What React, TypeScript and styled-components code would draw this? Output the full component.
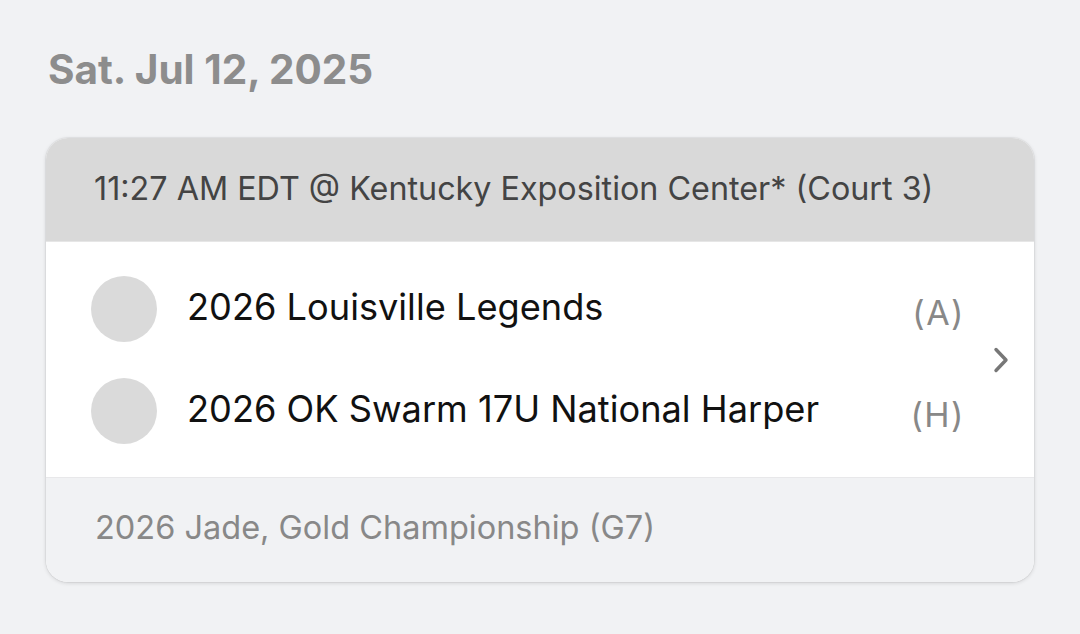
import React from "react";
import styled, { createGlobalStyle } from "styled-components";

const Global = createGlobalStyle`
  html, body { margin: 0; padding: 0; background: #f1f2f4; }
  body { font-family: "Inter", "Noto Sans", sans-serif; -webkit-font-smoothing: antialiased; }
`;

const Page = styled.div`
  width: 1080px;
  height: 634px;
  box-sizing: border-box;
  padding: 46px 46px 0 46px;
  background: #f1f2f4;
  display: flex;
  flex-direction: column;
`;

const DateTitle = styled.h1`
  margin: 0 0 0 2px;
  font-size: 40.5px;
  line-height: 48px;
  font-weight: 700;
  color: #8d8d8d;
  letter-spacing: 0;
`;

const Card = styled.div`
  margin-top: 44px;
  width: 988px;
  border-radius: 22px;
  overflow: hidden;
  background: #fff;
  box-shadow: 0 1px 4px rgba(0, 0, 0, 0.14), 0 0 0 1px rgba(0, 0, 0, 0.04);
  display: flex;
  flex-direction: column;
`;

const Header = styled.div`
  height: 104px;
  box-sizing: border-box;
  background: #d9d9d9;
  display: flex;
  align-items: center;
  padding: 0 0 3px 48px;
  font-size: 32.3px;
  color: #444;
  border-bottom: 1px solid #e6e6e6;
`;

const Body = styled.div`
  height: 235px;
  display: flex;
  align-items: center;
`;

const Rows = styled.div`
  flex: 1;
  display: flex;
  flex-direction: column;
  gap: 36px;
  padding-left: 45px;
`;

const TeamRow = styled.div`
  display: flex;
  align-items: center;
  height: 66px;
`;

const Avatar = styled.div`
  width: 66px;
  height: 66px;
  border-radius: 50%;
  background: #dadada;
  flex-shrink: 0;
`;

const TeamName = styled.div`
  margin-left: 30px;
  flex: 1;
  font-size: 36.2px;
  color: #111;
  margin-top: -3px;
`;

const Side = styled.div`
  font-size: 34px;
  color: #888;
  margin-top: 7px;
  letter-spacing: 1.5px;
`;

const ChevronBox = styled.div`
  width: 69px;
  padding-left: 3px;
  box-sizing: border-box;
  display: flex;
  justify-content: center;
  align-items: center;
`;

const Footer = styled.div`
  height: 105px;
  box-sizing: border-box;
  background: #f1f2f4;
  border-top: 1px solid #e8e8ea;
  display: flex;
  align-items: center;
  padding: 0 0 6px 49px;
  font-size: 32.5px;
  color: #888;
`;

export default function App() {
  return (
    <>
      <Global />
      <Page>
        <DateTitle>Sat. Jul 12, 2025</DateTitle>
        <Card>
          <Header>11:27 AM EDT @ Kentucky Exposition Center* (Court 3)</Header>
          <Body>
            <Rows>
              <TeamRow>
                <Avatar />
                <TeamName>2026 Louisville Legends</TeamName>
                <Side>(A)</Side>
              </TeamRow>
              <TeamRow>
                <Avatar />
                <TeamName>2026 OK Swarm 17U National Harper</TeamName>
                <Side>(H)</Side>
              </TeamRow>
            </Rows>
            <ChevronBox>
              <svg width="18" height="28" viewBox="0 0 18 28">
                <path d="M4 3.5 L14 14 L4 24.5" fill="none" stroke="#777" strokeWidth="3.4" strokeLinecap="round" strokeLinejoin="round" />
              </svg>
            </ChevronBox>
          </Body>
          <Footer>2026 Jade, Gold Championship (G7)</Footer>
        </Card>
      </Page>
    </>
  );
}
